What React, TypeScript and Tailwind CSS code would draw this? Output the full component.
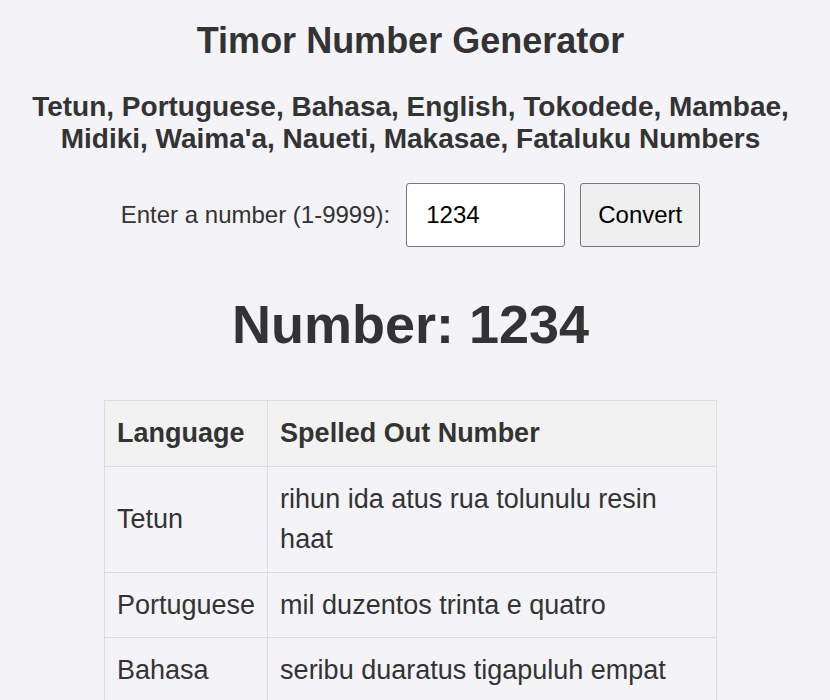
import React from "react";

const rows: [string, string][] = [
  ["Tetun", "rihun ida atus rua tolunulu resin haat"],
  ["Portuguese", "mil duzentos trinta e quatro"],
  ["Bahasa", "seribu duaratus tigapuluh empat"],
  ["English", "one thousand two hundred thirty-four"],
  ["Tokodede", "rihun ida atus rua sagulu tolu resin haat"],
  ["Mambae", "rihun id atus ru sagulu tel resin faat"],
  ["Midiki", "rihun ida atus rua sanulu telu resin haat"],
  ["Waima'a", "rihun ida atus rua sanulu kaitelu resin kaiha"],
  ["Naueti", "rihun ida atus rua sanulu telu resin haat"],
  ["Makasae", "rihun u atus ala kaituru resin kaiaste"],
  ["Fataluku", "rihun ukani atus kaka ta'e kafa resin fate"],
];

export default function App() {
  return (
    <div className="min-h-screen bg-[#f4f4f8] text-[#333] pr-[9px] pb-10" style={{ fontFamily: '"Liberation Sans", Arial, sans-serif' }}>
      <div className="flex flex-col items-center">
        <h1 className="mt-[20px] text-[36px] font-bold leading-[normal]">Timor Number Generator</h1>
        <h2 className="mt-[29px] text-[28px] font-bold leading-[normal] text-center">
          Tetun, Portuguese, Bahasa, English, Tokodede, Mambae,
          <br />
          Midiki, Waima'a, Naueti, Makasae, Fataluku Numbers
        </h2>
        <div className="mt-[28px] flex items-center h-[64px]">
          <label className="text-[24px] leading-[normal] mr-[16px]">Enter a number (1-9999):</label>
          <input
            type="text"
            defaultValue="1234"
            className="w-[159px] h-[64px] border border-[#767676] rounded-[3px] bg-white pl-[19px] text-[24px] text-black outline-none"
            style={{ fontFamily: '"Liberation Sans", Arial, sans-serif' }}
          />
          <button
            className="ml-[15px] w-[120px] h-[64px] border border-[#767676] rounded-[3px] bg-[#efefef] text-[24px] text-black"
            style={{ fontFamily: '"Liberation Sans", Arial, sans-serif' }}
          >
            Convert
          </button>
        </div>
        <h1 className="mt-[46px] text-[54px] font-bold leading-[normal]">Number: 1234</h1>
        <table className="mt-[45px] w-[613px] border-collapse text-[27px] leading-[1.5]">
          <thead>
            <tr className="bg-[#f2f2f2]">
              <th className="w-[163px] border border-[#dddddd] p-[12px] text-left font-bold">Language</th>
              <th className="border border-[#dddddd] p-[12px] text-left font-bold">Spelled Out Number</th>
            </tr>
          </thead>
          <tbody>
            {rows.map(([lang, text]) => (
              <tr key={lang}>
                <td className="border border-[#dddddd] p-[12px] align-middle">{lang}</td>
                <td className="border border-[#dddddd] p-[12px] align-middle">{text}</td>
              </tr>
            ))}
          </tbody>
        </table>
      </div>
    </div>
  );
}
